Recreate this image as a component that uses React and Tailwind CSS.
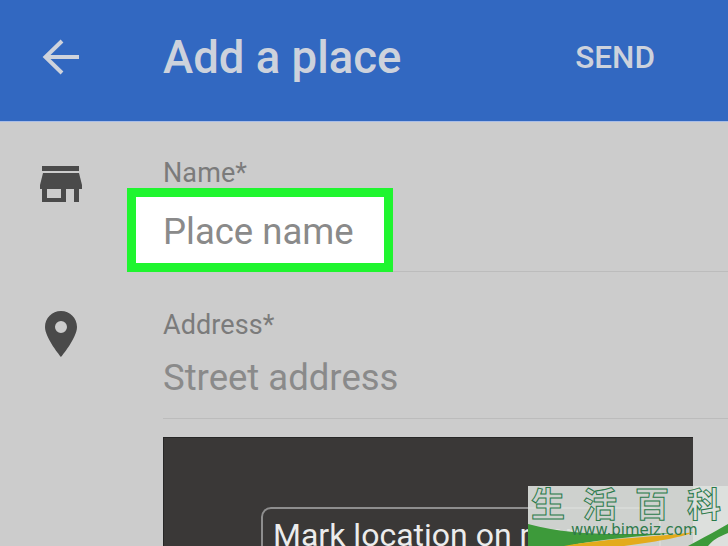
const Field = ({ label, placeholder, highlight, labelTop, inputTop, lineTop }) => {
  return (
    <div className="relative flex flex-col">
      <p className={`text-[27px] leading-[30px] tracking-[0.1px] text-[#7b7b7b] ${labelTop}`}>{label}</p>
      <div className={`relative ${inputTop}`}>
        {highlight && (
          <div className="absolute left-[-36px] top-[-23px] w-[266px] h-[84px] bg-white border-[9px] border-[#1ff52f]"></div>
        )}
        <p className="relative text-[36.5px] leading-[42px] text-[#8a8a8a]">{placeholder}</p>
      </div>
      <div className={`h-px bg-[#bcbcbc] ${lineTop}`}></div>
    </div>
  );
};

const App = () => {
  return (
    <div
      className="relative w-[728px] h-[546px] overflow-hidden bg-[#cccccc]"
      style={{ fontFamily: "Roboto, sans-serif" }}
    >
      <header className="flex items-center h-[121px] bg-[#3268c1] border-b border-[#a9bde6] box-content">
        <div className="flex justify-center w-[163px] pr-[41px] pb-[7px]">
          <svg width="38" height="36" viewBox="0 0 38 36" fill="none" stroke="#cfd3dc" strokeWidth="4">
            <path d="M37 18H3M20 2 3.5 18 20 34" />
          </svg>
        </div>
        <h1 className="flex-1 text-[45.5px] leading-[52px] font-medium text-[#cdd2dc] pb-[6px]">Add a place</h1>
        <button className="mr-[73px] text-[31.5px] leading-[36px] font-medium text-[#cdd2dc] pb-[6px]">SEND</button>
      </header>

      <main className="flex flex-col">
        <div className="flex">
          <div className="flex justify-center w-[163px] pr-[41px] pt-[43px]">
            <svg width="42" height="37" viewBox="0 0 42 37" fill="#4a4a4a">
              <path d="M2 1h37v5H2zM3 8h36l3 12v4H0v-4z" />
              <path d="M2 24h5v13H2zM7 33h14v4H7zM21 24h5v13h-5zM34 24h5v13h-5z" />
            </svg>
          </div>
          <div className="flex-1">
            <Field label="Name*" placeholder="Place name" highlight labelTop="mt-[36px]" inputTop="mt-[23px]" lineTop="mt-[18px]" />
          </div>
        </div>

        <div className="flex">
          <div className="flex justify-center w-[163px] pr-[41px] pt-[39px]">
            <svg width="32" height="46" viewBox="0 0 32 46" fill="#4a4a4a">
              <path
                fillRule="evenodd"
                d="M16 0C7 0 0 7 0 16c0 11 16 30 16 30s16-19 16-30C32 7 25 0 16 0zm0 10a6 6 0 1 1 0 12 6 6 0 0 1 0-12z"
              />
            </svg>
          </div>
          <div className="flex-1">
            <Field label="Address*" placeholder="Street address" labelTop="mt-[38px]" inputTop="mt-[17px]" lineTop="mt-[19px]" />
            <div className="mt-[18px] w-[530px] h-[200px] bg-[#3a3837] border-t border-l border-[#262626] pt-[69px] pl-[97px]">
              <div className="w-[400px] h-[70px] pt-[8px] px-[10px] rounded-[10px] border-2 border-[#8e8e8e] text-[32px] leading-[36px] text-[#ececec] whitespace-nowrap">
                Mark location on map
              </div>
            </div>
          </div>
        </div>
      </main>

      <div className="absolute right-0 bottom-0 w-[200px] h-[60px] bg-[#dfe2df]/90">
        <svg className="absolute left-0 bottom-0" width="200" height="22" viewBox="0 0 200 22">
          <path d="M0 0C30 8 60 10 90 10c20 0 40 0 55-1C120 12 70 15 40 22H0z" fill="#3d9a3a" />
          <path d="M36 22C80 14 130 13 166 8 152 14 125 18 96 22z" fill="#e3ab1c" />
          <path d="M160 22C175 14 190 6 200 0v9c-10 4-15 7-20 13z" fill="#3d9a3a" />
        </svg>
        <div
          className="relative flex gap-[18px] pl-[3px] text-[34px] leading-[34px] font-bold text-transparent [-webkit-text-stroke:1px_#2a7a4a] whitespace-nowrap"
          style={{ fontFamily: '"Noto Sans CJK SC", sans-serif' }}
        >
          <span>生</span>
          <span>活</span>
          <span>百</span>
          <span>科</span>
        </div>
        <p className="relative ml-[43px] mt-[1px] text-[15px] leading-[18px] text-[#2f7a4b] whitespace-nowrap" style={{ fontFamily: '"DejaVu Sans", sans-serif' }}>
          www.bimeiz.com
        </p>
      </div>
    </div>
  );
};

export default App;
